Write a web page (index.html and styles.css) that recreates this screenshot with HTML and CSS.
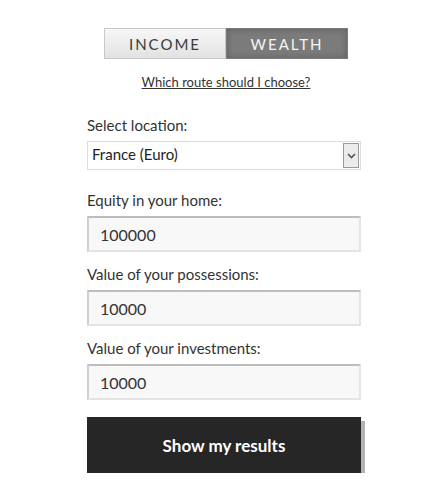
FILE: index.html
```html
<!DOCTYPE html>
<html lang="en">
<head>
  <meta charset="UTF-8">
  <title>Calculator</title>
  <link rel="stylesheet" href="styles.css">
</head>
<body>

  <div class="calc">
    <div class="toggle">
      <button class="tab">INCOME</button>
      <button class="tab on">WEALTH</button>
    </div>
    <a class="route" href="#">Which route should I choose?</a>

    <form class="form">
      <label class="label" for="loc">Select location:</label>
      <div class="select">
        <span class="select-val">France (Euro)</span>
        <span class="select-btn">
          <svg width="9" height="6" viewBox="0 0 9 6"><path d="M1 1 L4.5 4.5 L8 1" fill="none" stroke="#555" stroke-width="1.6"/></svg>
        </span>
      </div>

      <label class="label">Equity in your home:</label>
      <input class="field" type="text" value="100000">

      <label class="label">Value of your possessions:</label>
      <input class="field" type="text" value="10000">

      <label class="label">Value of your investments:</label>
      <input class="field" type="text" value="10000">

      <button class="go" type="button">Show my results</button>
    </form>
  </div>

</body>
</html>
```

FILE: styles.css
```css
body {
  margin: 0;
  font-family: Lato, 'Open Sans', sans-serif;
  color: #333;
  background: #fff;
}
.calc {
  width: 274px;
  margin-left: 87px;
  padding-top: 28px;
}
.toggle {
  display: flex;
  margin-left: 17px;
  width: 244px;
  height: 31px;
}
.tab {
  flex: 1;
  border: 1px solid #c8c8c8;
  background: linear-gradient(#f7f7f7, #e2e2e2);
  font-family: inherit;
  font-size: 15px;
  letter-spacing: 2px;
  color: #3a3a3a;
  padding: 0;
  cursor: pointer;
}
.tab.on {
  background: #7b7b7b;
  border-color: #7b7b7b;
  color: #f4f4f4;
  box-shadow: inset 0 0 6px rgba(0, 0, 0, 0.25);
}
.route {
  display: block;
  text-align: center;
  margin: 15px 0 0 17px;
  width: 244px;
  font-size: 13px;
  color: #333;
}
.form {
  display: flex;
  flex-direction: column;
  margin-top: 25px;
}
.label {
  font-size: 15px;
  line-height: 20px;
  color: #333;
  margin-bottom: 6px;
}
.select {
  display: flex;
  height: 29px;
  border: 1px solid #ddd;
  box-sizing: border-box;
  margin-bottom: 20px;
}
.select-val {
  flex: 1;
  font-size: 15px;
  line-height: 25px;
  padding-left: 4px;
  color: #222;
}
.select-btn {
  width: 14px;
  margin: 1px;
  border: 1px solid #999;
  background: #ececec;
  display: flex;
  align-items: center;
  justify-content: center;
}
.field {
  height: 36px;
  box-sizing: border-box;
  border: 2px solid #e4e4e4;
  border-top-color: #bdbdbd;
  border-left-color: #cfcfcf;
  background: #f8f8f8;
  font-family: inherit;
  font-size: 16px;
  color: #333;
  padding: 0 11px;
  margin-bottom: 12px;
}
.go {
  margin-top: 5px;
  height: 56px;
  border: none;
  background: #262626;
  color: #fff;
  font-family: inherit;
  font-weight: bold;
  font-size: 17px;
  box-shadow: 4px 4px 0 #b3b3b3;
  cursor: pointer;
}
```
